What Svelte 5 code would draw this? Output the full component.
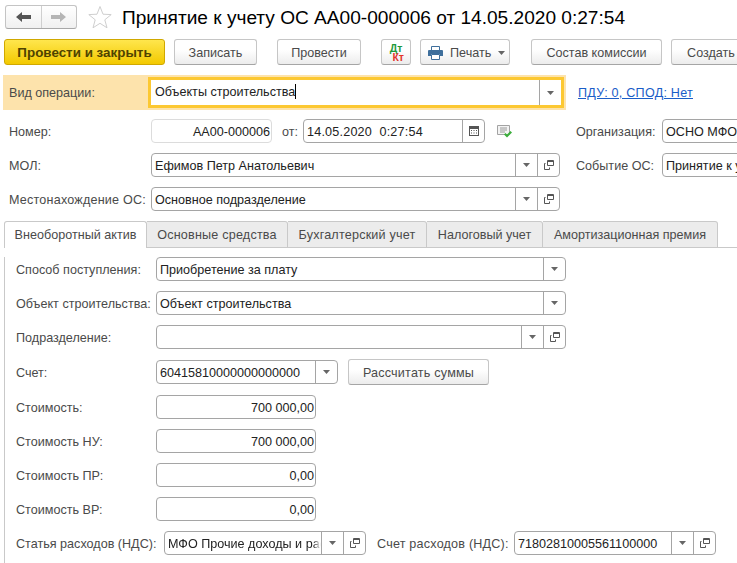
<script>
    const title = "Принятие к учету ОС АА00-000006 от 14.05.2020 0:27:54";
    const amounts = [
        { label: "Стоимость:", value: "700 000,00" },
        { label: "Стоимость НУ:", value: "700 000,00" },
        { label: "Стоимость ПР:", value: "0,00" },
        { label: "Стоимость ВР:", value: "0,00" },
    ];
    const tabs = ["Основные средства", "Бухгалтерский учет", "Налоговый учет", "Амортизационная премия"];
</script>

{#snippet caret()}
    <span class="btn-cell">
        <svg width="7" height="4" viewBox="0 0 7 4"><path d="M0 0h7L3.500 4z" fill="#666" /></svg>
    </span>
{/snippet}

{#snippet openIcon()}
    <span class="btn-cell">
        <svg width="10" height="10" viewBox="0 0 10 10" fill="none" stroke="#555">
            <path d="M3.500 .5h6v5h-6z" />
            <path d="M3.500 1.500h6" />
            <path d="M1.500 3.500h-1v6h5v-2" />
        </svg>
    </span>
{/snippet}

<div class="page">
    <div class="nav">
        <div class="nav-group">
            <span class="nav-btn first">
                <svg width="15" height="10" viewBox="0 0 15 10"><path d="M0 5l6-5v3h9v4H6v3z" fill="#555" /></svg>
            </span>
            <span class="nav-btn">
                <svg width="15" height="10" viewBox="0 0 15 10"><path d="M15 5L9 0v3H0v4h9v3z" fill="#b5b5b5" /></svg>
            </span>
        </div>
        <svg class="star" width="24" height="24" viewBox="0 0 24 24">
            <path d="M12 1.500l3 7.700 8.200.4-6.400 5.200 2.200 8-7-4.500-7 4.500 2.200-8L.8 9.600 9 9.200z" fill="#fff" stroke="#cfcfcf" />
        </svg>
        <h1>{title}</h1>
    </div>

    <div class="toolbar">
        <button class="primary">Провести и закрыть</button>
        <button class="w-save">Записать</button>
        <button class="w-post">Провести</button>
        <button class="w-dtkt">
            <span class="dtkt"><span class="dt">Дт</span><span class="kt">Кт</span></span>
        </button>
        <button class="w-print">
            <svg width="15" height="14" viewBox="0 0 15 14">
                <path d="M3.500 .5h8v4h-8z" fill="#fff" stroke="#3f6f9c" />
                <path d="M1 4h13q1 0 1 1v5h-3V8H3v2H0V5q0-1 1-1z" fill="#3f6f9c" />
                <path d="M3.500 8.500h8v5h-8z" fill="#fff" stroke="#3f6f9c" />
            </svg>
            <span>Печать</span>
            <svg width="7" height="4" viewBox="0 0 7 4"><path d="M0 0h7L3.500 4z" fill="#666" /></svg>
        </button>
        <button class="w-commission">Состав комиссии</button>
        <button class="w-create">Создать</button>
    </div>

    <div class="operation-row">
        <div class="operation">
            <span class="op-label">Вид операции:</span>
            <div class="op-input">
                <span class="value grow">Объекты строительства<span class="cursor"></span></span>
                {@render caret()}
            </div>
        </div>
        <a class="link" href="#pdu">ПДУ: 0, СПОД: Нет</a>
    </div>

    <div class="row row-first">
        <span class="label head-label">Номер:</span>
        <div class="field readonly w-number"><span class="value grow right">АА00-000006</span></div>
        <span class="label from">от:</span>
        <div class="field w-date">
            <span class="value grow spaced">14.05.2020&nbsp; 0:27:54</span>
            <span class="btn-cell">
                <svg width="10" height="10" viewBox="0 0 10 10">
                    <path d="M0 0h10v10H0z" fill="#555" />
                    <path d="M1 3h8v6H1z" fill="#fff" />
                    <path d="M2 4h1v1H2zM4.500 4h1v1h-1zM7 4h1v1H7zM2 6.500h1v1H2zM4.500 6.500h1v1h-1zM7 6.500h1v1H7z" fill="#555" />
                </svg>
            </span>
        </div>
        <svg class="note" width="16" height="13" viewBox="0 0 16 13">
            <path d="M.5 .5h12v9H.5z" fill="#f3f3f3" stroke="#a3a3a3" />
            <path d="M3 3h7M3 5h7M3 7h5" stroke="#9a9a9a" />
            <path d="M7 9.500l1.500-1.500 1.500 1.500 3.500-3.500L15 7.500 10 12.500z" fill="#3cae3c" />
        </svg>
        <span class="label side-label">Организация:</span>
        <div class="field w-side"><span class="value grow">ОСНО МФО</span></div>
    </div>

    <div class="row">
        <span class="label head-label">МОЛ:</span>
        <div class="field w-head">
            <span class="value grow">Ефимов Петр Анатольевич</span>
            {@render caret()}
            {@render openIcon()}
        </div>
        <span class="label side-label event">Событие ОС:</span>
        <div class="field w-side"><span class="value grow">Принятие к учету</span></div>
    </div>

    <div class="row">
        <span class="label head-label spaced">Местонахождение ОС:</span>
        <div class="field w-head">
            <span class="value grow">Основное подразделение</span>
            {@render caret()}
            {@render openIcon()}
        </div>
    </div>

    <div class="tabs">
        <span class="tab active">Внеоборотный актив</span>
        {#each tabs as tab}
            <span class="tab">{tab}</span>
        {/each}
    </div>

    <div class="panel">
        <div class="row">
            <span class="label body-label">Способ поступления:</span>
            <div class="field w-body">
                <span class="value grow">Приобретение за плату</span>
                {@render caret()}
            </div>
        </div>
        <div class="row">
            <span class="label body-label">Объект строительства:</span>
            <div class="field w-body">
                <span class="value grow">Объект строительства</span>
                {@render caret()}
            </div>
        </div>
        <div class="row">
            <span class="label body-label">Подразделение:</span>
            <div class="field w-body">
                <span class="value grow"></span>
                {@render caret()}
                {@render openIcon()}
            </div>
        </div>
        <div class="row row-tall">
            <span class="label body-label">Счет:</span>
            <div class="field w-account">
                <span class="value grow">60415810000000000000</span>
                {@render caret()}
            </div>
            <button class="w-calc spaced">Рассчитать суммы</button>
        </div>
        {#each amounts as a}
            <div class="row">
                <span class="label body-label">{a.label}</span>
                <div class="field w-amount"><span class="value grow right">{a.value}</span></div>
            </div>
        {/each}
        <div class="row">
            <span class="label vat-label">Статья расходов (НДС):</span>
            <div class="field w-vat">
                <span class="value grow clip">МФО Прочие доходы и расходы</span>
                {@render caret()}
                {@render openIcon()}
            </div>
            <span class="label vat-account spaced">Счет расходов (НДС):</span>
            <div class="field w-vat">
                <span class="value grow">71802810005561100000</span>
                {@render caret()}
                {@render openIcon()}
            </div>
        </div>
    </div>
</div>

<style>
    :global(body) {
        margin: 0;
        background: #fff;
    }

    .page {
        width: 737px;
        height: 563px;
        overflow: hidden;
        position: relative;
        background: #fff;
        font-family: "Liberation Sans", Arial, sans-serif;
        font-size: 12.6px;
        color: #4a4a4a;
    }

    svg {
        flex: none;
    }

    .spaced {
        letter-spacing: 0.2px;
    }

    .nav {
        display: flex;
        align-items: center;
        height: 24px;
        padding: 5px 0 0 5px;
    }

    .nav-group {
        display: flex;
        width: 72px;
        height: 24px;
        box-sizing: border-box;
        border: 1px solid #c4c4c4;
        border-bottom-color: #a8a8a8;
        border-radius: 3px;
        background: linear-gradient(#fff, #f0f0f0);
    }

    .nav-btn {
        flex: 1;
        display: flex;
        align-items: center;
        justify-content: center;
    }

    .nav-btn.first {
        border-right: 1px solid #cfcfcf;
    }

    .star {
        margin-left: 11px;
    }

    h1 {
        margin: 2px 0 0 10px;
        font-size: 19.1px;
        font-weight: normal;
        color: #000;
        white-space: nowrap;
    }

    .toolbar {
        display: flex;
        height: 26px;
        margin: 10px 0 0 4px;
        white-space: nowrap;
    }

    button {
        flex: none;
        display: flex;
        align-items: center;
        justify-content: center;
        height: 26px;
        padding: 1px 0 0;
        box-sizing: border-box;
        border: 1px solid #c6c6c6;
        border-bottom-color: #a5a5a5;
        border-radius: 3px;
        background: linear-gradient(#fff 40%, #ececec);
        font: inherit;
        color: #4a4a4a;
    }

    .primary {
        width: 161px;
        border-color: #d0a800;
        background: linear-gradient(#ffe64d, #f3c900);
        font-weight: bold;
        font-size: 13.4px;
        color: #4f4300;
    }

    .w-save {
        width: 83px;
        margin-left: 9px;
    }

    .w-post {
        width: 84px;
        margin-left: 20px;
    }

    .w-dtkt {
        width: 30px;
        margin-left: 20px;
    }

    .dtkt {
        display: flex;
        flex-direction: column;
        width: 16px;
        font-size: 10.5px;
        font-weight: bold;
        line-height: 9px;
    }

    .dt {
        color: #1f9a3c;
    }

    .kt {
        align-self: flex-end;
        color: #e2342b;
    }

    .w-print {
        width: 90px;
        margin-left: 9px;
        padding-left: 7px;
        justify-content: flex-start;
        gap: 7px;
    }

    .w-commission {
        width: 131px;
        margin-left: 21px;
    }

    .w-create {
        width: 80px;
        margin-left: 9px;
    }

    .operation-row {
        display: flex;
        align-items: center;
        margin: 10px 0 0 3px;
    }

    .operation {
        display: flex;
        align-items: center;
        width: 563px;
        height: 35px;
        background: #fde3ac;
    }

    .op-label {
        width: 145px;
        padding-left: 6px;
        box-sizing: border-box;
    }

    .op-input {
        display: flex;
        width: 416px;
        height: 31px;
        box-sizing: border-box;
        border: 3px solid #fcc832;
        background: #fff;
        color: #222;
    }

    .op-input .value {
        padding: 0 4px;
        line-height: 25px;
    }

    .cursor {
        display: inline-block;
        width: 1px;
        height: 15px;
        background: #000;
        vertical-align: -3px;
    }

    .link {
        margin-left: 12px;
        color: #1a5dc8;
        letter-spacing: 0.23px;
    }

    .row {
        display: flex;
        align-items: center;
        height: 24px;
        margin-top: 10px;
        white-space: nowrap;
    }

    .row-first {
        margin-top: 9px;
    }

    .row-tall {
        height: 26px;
        align-items: flex-start;
    }

    .row-tall .label {
        line-height: 26px;
    }

    .row-tall .field {
        margin-top: 1px;
    }

    .label {
        flex: none;
        padding-top: 1px;
    }

    .head-label {
        width: 142px;
        margin-left: 9px;
    }

    .from {
        width: 21px;
        margin-left: 10px;
    }

    .note {
        margin-left: 12px;
    }

    .side-label {
        width: 86px;
        margin-left: 63px;
    }

    .side-label.event {
        margin-left: 16px;
    }

    .field {
        flex: none;
        display: flex;
        height: 24px;
        box-sizing: border-box;
        border: 1px solid #a5a5a5;
        border-radius: 4px;
        background: #fff;
        color: #222;
        overflow: hidden;
    }

    .field.readonly {
        border-color: #dcdcdc;
    }

    .value {
        padding: 0 3px;
        line-height: 25px;
        overflow: hidden;
        white-space: nowrap;
    }

    .grow {
        flex: 1;
        min-width: 0;
    }

    .right {
        text-align: right;
        padding-right: 1px;
    }

    .clip {
        padding-right: 0;
        mask-image: linear-gradient(to left, transparent, #000 8px);
    }

    .btn-cell {
        flex: none;
        display: flex;
        align-items: center;
        justify-content: center;
        width: 21px;
        border-left: 1px solid #a5a5a5;
    }

    .w-number {
        width: 121px;
    }

    .w-date {
        width: 182px;
    }

    .w-head {
        width: 409px;
    }

    .w-side {
        width: 100px;
    }

    .tabs {
        display: flex;
        align-items: flex-start;
        height: 27px;
        box-sizing: border-box;
        margin: 10px 0 0 4px;
        border-bottom: 1px solid #c9c9c9;
    }

    .tab {
        flex: none;
        height: 27px;
        box-sizing: border-box;
        border: 1px solid #c9c9c9;
        border-left: none;
        border-radius: 0 3px 0 0;
        background: #ececec;
        line-height: 26px;
        text-align: center;
        white-space: nowrap;
    }

    .tab:nth-child(1) {
        width: 143px;
    }

    .tab:nth-child(2) {
        width: 141px;
        letter-spacing: 0.2px;
    }

    .tab:nth-child(3) {
        width: 139px;
        letter-spacing: 0.2px;
    }

    .tab:nth-child(4) {
        width: 116px;
    }

    .tab:nth-child(5) {
        width: 175px;
    }

    .tab.active {
        border-left: 1px solid #c9c9c9;
        border-bottom: none;
        border-radius: 3px 3px 0 0;
        background: #fff;
    }

    .panel {
        border-left: 1px solid #c9c9c9;
        margin-left: 4px;
        padding-top: 0.01px;
        height: 320px;
    }

    .panel > .row:first-child {
        margin-top: 9px;
    }

    .body-label {
        width: 140px;
        margin-left: 11px;
    }

    .w-body {
        width: 410px;
    }

    .w-account {
        width: 182px;
    }

    .w-calc {
        width: 141px;
        margin-left: 10px;
    }

    .w-amount {
        width: 160px;
    }

    .vat-label {
        width: 148px;
        margin-left: 11px;
    }

    .w-vat {
        width: 202px;
    }

    .vat-account {
        width: 137px;
        margin-left: 11px;
    }
</style>
